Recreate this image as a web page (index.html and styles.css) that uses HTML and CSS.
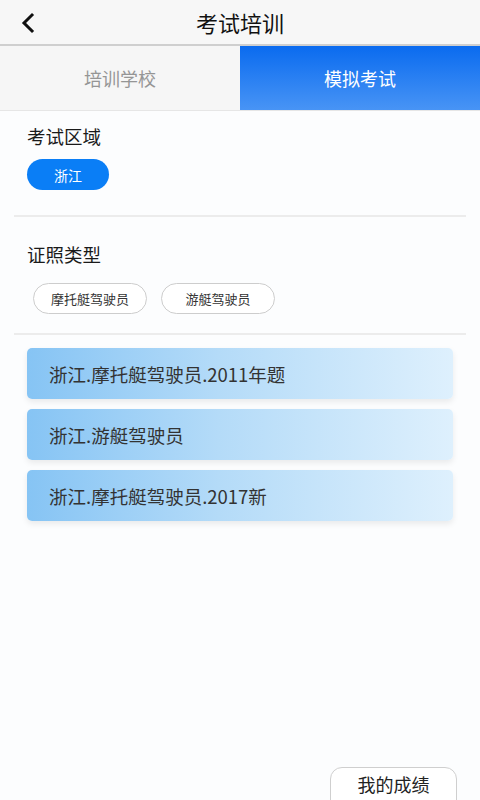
FILE: index.html
```html
<!DOCTYPE html>
<html lang="zh-CN">
<head>
<meta charset="utf-8">
<title>考试培训</title>
<link rel="stylesheet" href="styles.css">
</head>
<body>
<div class="page">
  <header class="topbar">
    <span class="back">
      <svg width="16" height="22" viewBox="0 0 16 22"><path d="M12 3 L4 11 L12 19" fill="none" stroke="#111" stroke-width="3" stroke-linecap="square"/></svg>
    </span>
    <h1 class="title">考试培训</h1>
  </header>
  <nav class="tabs">
    <div class="tab">培训学校</div>
    <div class="tab active">模拟考试</div>
  </nav>
  <section class="section first">
    <h2 class="sec-title">考试区域</h2>
    <div class="chips">
      <span class="chip selected">浙江</span>
    </div>
  </section>
  <section class="section second">
    <h2 class="sec-title">证照类型</h2>
    <div class="chips indent">
      <span class="chip outline">摩托艇驾驶员</span>
      <span class="chip outline">游艇驾驶员</span>
    </div>
  </section>
  <div class="cards">
    <div class="card">浙江.摩托艇驾驶员.2011年题</div>
    <div class="card">浙江.游艇驾驶员</div>
    <div class="card">浙江.摩托艇驾驶员.2017新</div>
  </div>
  <div class="footer">
    <button class="score-btn">我的成绩</button>
  </div>
</div>
</body>
</html>
```

FILE: styles.css
```css
* { box-sizing: border-box; }
html, body { margin: 0; padding: 0; }
body {
  font-family: "Noto Sans CJK SC", "Noto Sans", sans-serif;
  background: #fcfdfe;
  color: #222;
}
.page {
  width: 480px;
  height: 800px;
  overflow: hidden;
  display: flex;
  flex-direction: column;
}
.topbar {
  height: 46px;
  background: #f7f7f7;
  border-bottom: 2px solid #cfcfcf;
  display: flex;
  align-items: center;
  justify-content: center;
  position: relative;
  flex-shrink: 0;
}
.back {
  position: absolute;
  left: 20px;
  top: 12px;
  width: 16px;
  height: 22px;
  display: flex;
}
.title {
  margin: 0;
  font-size: 22px;
  font-weight: 400;
  color: #111;
  line-height: 1;
}
.tabs {
  display: flex;
  height: 65px;
  border-bottom: 1px solid #e6e6e6;
  flex-shrink: 0;
}
.tab {
  flex: 1;
  display: flex;
  align-items: center;
  justify-content: center;
  font-size: 18px;
  color: #959595;
  background: #f6f6f6;
}
.tab.active {
  color: #fff;
  background: linear-gradient(to bottom, #0a6bef, #4894f5);
}
.section {
  margin: 0 14px 0 14px;
  border-bottom: 2px solid #ececec;
  padding-left: 13px;
}
.section.first {
  padding-top: 13px;
  padding-bottom: 25px;
}
.section.second {
  padding-top: 25px;
  padding-bottom: 19px;
}
.sec-title {
  margin: 0;
  font-size: 18.5px;
  font-weight: 400;
  line-height: 24px;
  color: #1a1a1a;
}
.chips {
  display: flex;
  gap: 14px;
}
.first .chips { margin-top: 11px; }
.second .chips { margin-top: 17px; }
.chips.indent { padding-left: 6px; }
.chip {
  display: inline-flex;
  align-items: center;
  justify-content: center;
  height: 31px;
  border-radius: 16px;
}
.chip.selected {
  width: 82px;
  background: #0a7ef6;
  color: #fff;
  font-size: 14px;
}
.chip.outline {
  width: 114px;
  border: 1.5px solid #cdcdcd;
  color: #333;
  font-size: 13px;
  background: #fff;
}
.cards {
  display: flex;
  flex-direction: column;
  gap: 10px;
  padding: 13px 27px 0 27px;
}
.card {
  height: 51px;
  width: 426px;
  border-radius: 5px;
  background: linear-gradient(to right, #86c4f4 0%, #b4dbf8 45%, #def0fd 100%);
  box-shadow: 0 3px 6px rgba(0, 0, 0, 0.08);
  display: flex;
  align-items: center;
  padding-left: 22px;
  font-size: 18.5px;
  color: #333;
}
.footer {
  margin-top: auto;
  display: flex;
  justify-content: flex-end;
  padding-right: 23px;
  margin-bottom: -12px;
}
.score-btn {
  width: 127px;
  height: 45px;
  border: 1.5px solid #cfcfcf;
  border-radius: 12px;
  background: #fff;
  font-family: "Noto Sans CJK SC", "Noto Sans", sans-serif;
  font-size: 18px;
  color: #222;
  display: flex;
  align-items: flex-end;
  justify-content: center;
  padding: 0 0 14px 0;
}
```
